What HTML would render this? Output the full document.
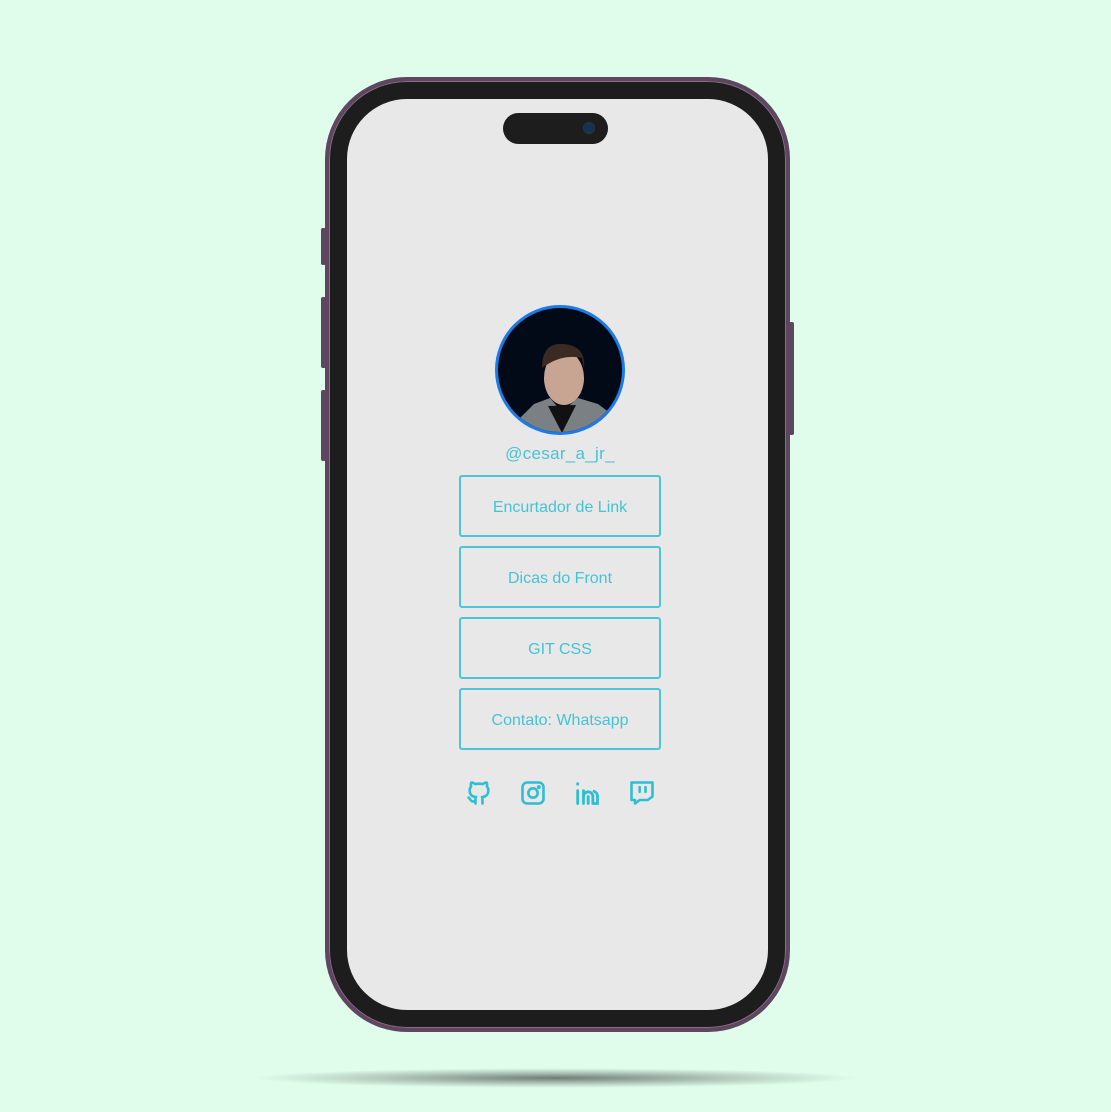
<!DOCTYPE html>
<html><head><style>
html,body{margin:0;padding:0;}
body{width:1111px;height:1112px;background:#e0fdec;position:relative;overflow:hidden;font-family:"Liberation Sans",sans-serif;}
.abs{position:absolute;}
.frame{left:325px;top:77px;width:465px;height:955px;border-radius:82px;background:#1e1d1d;box-sizing:border-box;border:4px solid #5e4560;box-shadow:inset 0 0 0 1px #8a6f8a;}
.screen{left:347px;top:99px;width:421px;height:911px;border-radius:60px;background:#e8e8e8;}
.island{left:503px;top:113px;width:105px;height:31px;border-radius:16px;background:#1e1d1d;}
.cam{left:584px;top:123px;width:10px;height:10px;border-radius:50%;background:#12325a;box-shadow:0 0 0 1px #333;}
.btn{background:#5e4560;border-radius:2px;}
.avatar{left:495px;top:305px;width:130px;height:130px;border-radius:50%;box-sizing:border-box;border:3px solid #1e7ae6;background:#020a17;overflow:hidden;}
.user{left:460px;top:444px;width:200px;text-align:center;color:#45c3d5;font-size:17px;letter-spacing:0.3px;}
.link{left:459px;width:202px;height:62px;box-sizing:border-box;border:2px solid #4cc6d6;border-radius:3px;color:#45c3d5;font-size:16px;display:flex;align-items:center;justify-content:center;padding-top:3px;}
.shadow{left:250px;top:1068px;width:610px;height:20px;border-radius:50%;background:radial-gradient(ellipse at center,rgba(0,0,0,0.5) 0%,rgba(0,0,0,0.2) 40%,rgba(0,0,0,0) 70%);}
svg{position:absolute;}
</style></head><body>
<div class="abs shadow"></div>
<div class="abs btn" style="left:321px;top:228px;width:5px;height:37px"></div>
<div class="abs btn" style="left:321px;top:297px;width:5px;height:71px"></div>
<div class="abs btn" style="left:321px;top:390px;width:5px;height:71px"></div>
<div class="abs btn" style="left:789px;top:322px;width:5px;height:113px"></div>
<div class="abs frame"></div>
<div class="abs screen"></div>
<div class="abs island"></div>
<div class="abs cam"></div>
<div class="abs avatar">
<svg width="124" height="124" viewBox="0 0 124 124" style="left:0;top:0">
<path d="M20 112 L36 96 L52 90 L64 104 L80 90 L100 96 L116 108 L120 124 L10 124Z" fill="#7b8085"/>
<path d="M50 98 L64 125 L78 97 Z" fill="#111"/>
<ellipse cx="66" cy="70" rx="20" ry="27" fill="#c8a592"/>
<path d="M44 60 Q44 34 66 36 Q88 38 86 60 L84 50 Q66 46 50 56 Z" fill="#3a2a22"/>
</svg>
</div>
<div class="abs user">@cesar_a_jr_</div>
<div class="abs link" style="top:475px">Encurtador de Link</div>
<div class="abs link" style="top:546px">Dicas do Front</div>
<div class="abs link" style="top:617px">GIT CSS</div>
<div class="abs link" style="top:688px">Contato: Whatsapp</div>
<svg width="28" height="28" viewBox="0 0 24 24" style="left:465px;top:779px" fill="none" stroke="#2fbdd2" stroke-width="2.2" stroke-linecap="round" stroke-linejoin="round"><path d="M9 19c-4.3 1.4-4.3-2.5-6-3m12 5v-3.5c0-1 .1-1.4-.5-2 2.8-.3 5.5-1.4 5.5-6a4.6 4.6 0 0 0-1.3-3.2 4.2 4.2 0 0 0-.1-3.2s-1.1-.3-3.5 1.3a12.3 12.3 0 0 0-6.2 0C6.5 2.8 5.4 3.1 5.4 3.1a4.2 4.2 0 0 0-.1 3.2A4.6 4.6 0 0 0 4 9.5c0 4.6 2.7 5.7 5.5 6-.6.6-.6 1.2-.5 2V21"/></svg>
<svg width="28" height="28" viewBox="0 0 24 24" style="left:519px;top:779px" fill="none" stroke="#2fbdd2" stroke-width="2.2"><rect x="3" y="3" width="18" height="18" rx="4"/><circle cx="12" cy="12" r="4"/><circle cx="17" cy="7" r=".6" fill="#2fbdd2"/></svg>
<svg width="28" height="28" viewBox="0 0 24 24" style="left:573px;top:779px" fill="none" stroke="#2fbdd2" stroke-width="2.4" stroke-linecap="round"><path d="M4 10v11M4 4v.5M9 21v-11"/><path d="M9 15a4 4 0 0 1 8 0v6M13 21v-6M17 21h4v-6a5 5 0 0 0-3-4.5"/></svg>
<svg width="28" height="28" viewBox="0 0 24 24" style="left:628px;top:779px" fill="none" stroke="#2fbdd2" stroke-width="2.2" stroke-linejoin="round"><path d="M3 3h18v12l-4 3h-7l-4 3v-3H3z"/><path d="M10 7v4M15 7v4" stroke-linecap="round"/></svg>
</body></html>
